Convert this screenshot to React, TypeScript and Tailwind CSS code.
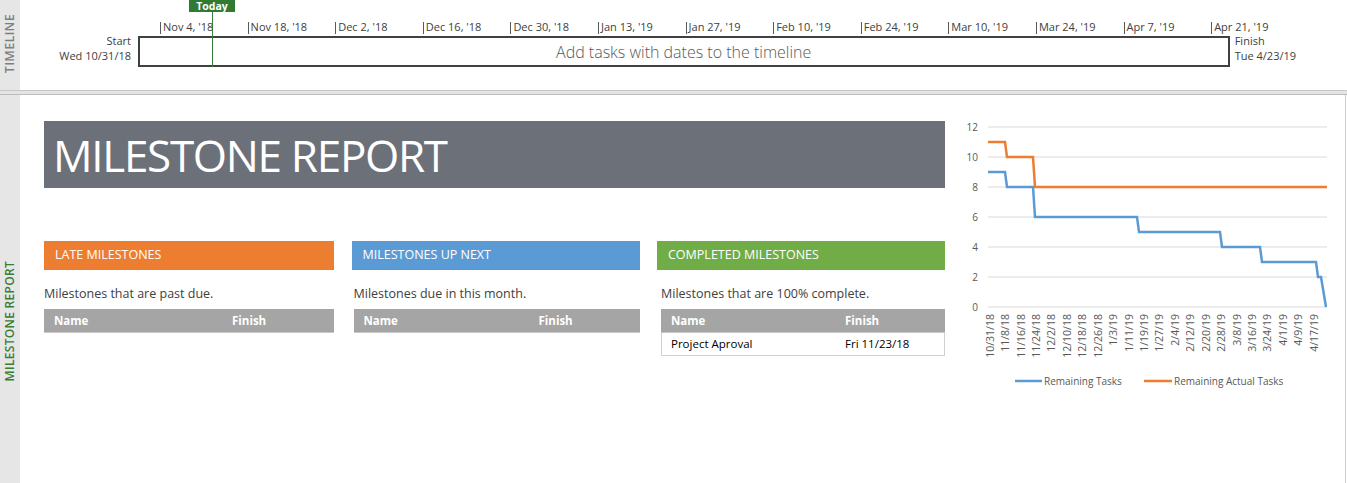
import { ReactNode } from "react";

const TICKS = [
  "Nov 4, '18",
  "Nov 18, '18",
  "Dec 2, '18",
  "Dec 16, '18",
  "Dec 30, '18",
  "Jan 13, '19",
  "Jan 27, '19",
  "Feb 10, '19",
  "Feb 24, '19",
  "Mar 10, '19",
  "Mar 24, '19",
  "Apr 7, '19",
  "Apr 21, '19",
];

const DATES = [
  "10/31/18", "11/8/18", "11/16/18", "11/24/18", "12/2/18", "12/10/18", "12/18/18", "12/26/18",
  "1/3/19", "1/11/19", "1/19/19", "1/27/19", "2/4/19", "2/12/19", "2/20/19", "2/28/19",
  "3/8/19", "3/16/19", "3/24/19", "4/1/19", "4/9/19", "4/17/19",
];

// step points: [x, value] in page px
const ACTUAL: [number, number][] = [
  [988, 11], [1005, 11], [1007, 10], [1033, 10], [1035, 8], [1327, 8],
];
const REMAINING: [number, number][] = [
  [988, 9], [1005, 9], [1007, 8], [1033, 8], [1035, 6], [1137, 6], [1139, 5], [1220, 5],
  [1222, 4], [1260, 4], [1262, 3], [1316, 3], [1318, 2], [1321, 2], [1326, 0],
];

const OX = 945;
const OY = 110;
const yOf = (v: number) => 307 - v * 15 - OY;

export default function App() {
  return (
    <div className="flex h-[483px] w-[1347px] flex-col overflow-hidden bg-white font-['Open_Sans',sans-serif] text-[#404040]">
      <div className="flex h-[90px]">
        <SideLabel className="pb-[3px] text-[12.5px] text-[#7f7f7f]">TIMELINE</SideLabel>
        <Timeline />
      </div>
      <div className="h-[5px] border-y border-t-[#c6c6c6] border-b-[#bcbcbc] bg-[#e4e4e4]" />
      <div className="flex flex-1">
        <SideLabel className="pt-[64px] text-[12px] text-[#3b7d33]">MILESTONE REPORT</SideLabel>
        <div className="mr-px flex flex-1 items-start border-r border-[#cfcfcf]">
          <div className="w-[925px] pl-[24px] pt-[26px]">
            <div className="flex h-[67px] items-center bg-[#6c7079] pl-[9px] text-[44px] leading-none tracking-[-1.3px] text-white">
              MILESTONE REPORT
            </div>
            <div className="mt-[53px] grid grid-cols-[290px_288px_288px] gap-x-[17.5px]">
              <Panel title="LATE MILESTONES" color="bg-[#ed7d31]" desc="Milestones that are past due." finishAt="w-[178px]" />
              <Panel title="MILESTONES UP NEXT" color="bg-[#5b9bd5]" desc="Milestones due in this month." finishAt="w-[175px]" shift="pl-[2px]" />
              <Panel
                title="COMPLETED MILESTONES"
                color="bg-[#70ad47]"
                desc="Milestones that are 100% complete."
                finishAt="w-[174px]"
                shift="pl-[4px]"
                rows={[["Project Aproval", "Fri 11/23/18"]]}
              />
            </div>
          </div>
          <Chart />
        </div>
      </div>
    </div>
  );
}

function SideLabel({ children, className }: { children: ReactNode; className: string }) {
  return (
    <div className={`flex w-[20px] shrink-0 items-center justify-center bg-[#e6e6e6] ${className}`}>
      <span className="rotate-180 font-semibold leading-none tracking-[0.3px] [writing-mode:vertical-rl]">{children}</span>
    </div>
  );
}

function Timeline() {
  return (
    <div className="relative flex-1 text-[11px]">
      <div className="flex pl-[140px] pt-[22px]">
        {TICKS.map((t) => (
          <div key={t} className="h-[12px] w-[87.6px] shrink-0 border-l border-[#595959] pl-[2px] leading-[10px] whitespace-nowrap">
            {t}
          </div>
        ))}
      </div>
      <div className="mt-[2px] flex">
        <div className="-mt-[3px] w-[111px] text-right leading-[15px]">
          <div>Start</div>
          <div>Wed 10/31/18</div>
        </div>
        <div className="ml-[6.7px] flex h-[31px] w-[1092px] items-center justify-center border-2 border-[#404040] text-[16px] font-light text-[#595959]">
          Add tasks with dates to the timeline
        </div>
        <div className="-mt-[3px] ml-[5px] leading-[15px]">
          <div>Finish</div>
          <div>Tue 4/23/19</div>
        </div>
      </div>
      <div className="absolute left-[169px] top-0 flex h-[12px] w-[46px] items-center justify-center bg-[#317a31] text-[10.5px] font-bold leading-[11px] text-white">
        Today
      </div>
      <div className="absolute left-[192px] top-[11px] h-[56px] w-px bg-[#3a7d3a]" />
    </div>
  );
}

function Panel({
  title,
  color,
  desc,
  finishAt,
  shift = "",
  rows = [],
}: {
  title: string;
  color: string;
  desc: string;
  finishAt: string;
  shift?: string;
  rows?: string[][];
}) {
  return (
    <div>
      <div className={`flex h-[29px] items-center pl-[11px] text-[12.5px] text-white ${color}`}>{title}</div>
      <div className={`mt-[16px] text-[12.5px] leading-[16px] ${shift}`}>{desc}</div>
      <div className={shift}>
        <div className="mt-[7px] flex h-[24px] items-center border-b border-[#c8c8c8] bg-[#a5a5a5] pl-[10px] text-[11.5px] font-bold text-white">
          <span className={finishAt}>Name</span>
          <span>Finish</span>
        </div>
        {rows.map((r) => (
          <div key={r[0]} className="flex h-[23px] items-center border-x border-b border-[#d0d0d0] pl-[9px] text-[11.5px] text-black">
            <span className={finishAt}>{r[0]}</span>
            <span>{r[1]}</span>
          </div>
        ))}
      </div>
    </div>
  );
}

function Chart() {
  const pts = (d: [number, number][]) => d.map(([x, v]) => `${x - OX},${yOf(v)}`).join(" ");
  return (
    <svg width={399} height={290} className="mt-[15px] shrink-0 font-['Open_Sans',sans-serif]">
      {[0, 2, 4, 6, 8, 10, 12].map((v) => (
        <g key={v}>
          <line x1={988 - OX} x2={1327 - OX} y1={yOf(v)} y2={yOf(v)} stroke="#d9d9d9" strokeWidth={1} />
          <text x={978 - OX} y={yOf(v) + 3.5} textAnchor="end" fontSize={10} fill="#595959">
            {v}
          </text>
        </g>
      ))}
      {DATES.map((d, i) => {
        const cx = 990 + i * 15.43 - OX + 3.7;
        const cy = 314 - OY;
        return (
          <text key={d} x={cx} y={cy} transform={`rotate(-90 ${cx} ${cy})`} textAnchor="end" fontSize={10.5} fill="#595959">
            {d}
          </text>
        );
      })}
      <polyline points={pts(ACTUAL)} fill="none" stroke="#ed7d31" strokeWidth={2.5} />
      <polyline points={pts(REMAINING)} fill="none" stroke="#5b9bd5" strokeWidth={2.5} />
      <line x1={1015 - OX} x2={1042 - OX} y1={381 - OY} y2={381 - OY} stroke="#5b9bd5" strokeWidth={2.5} />
      <text x={1044 - OX} y={384.5 - OY} fontSize={10} fill="#595959">
        Remaining Tasks
      </text>
      <line x1={1144 - OX} x2={1172 - OX} y1={381 - OY} y2={381 - OY} stroke="#ed7d31" strokeWidth={2.5} />
      <text x={1174 - OX} y={384.5 - OY} fontSize={10} fill="#595959">
        Remaining Actual Tasks
      </text>
    </svg>
  );
}
